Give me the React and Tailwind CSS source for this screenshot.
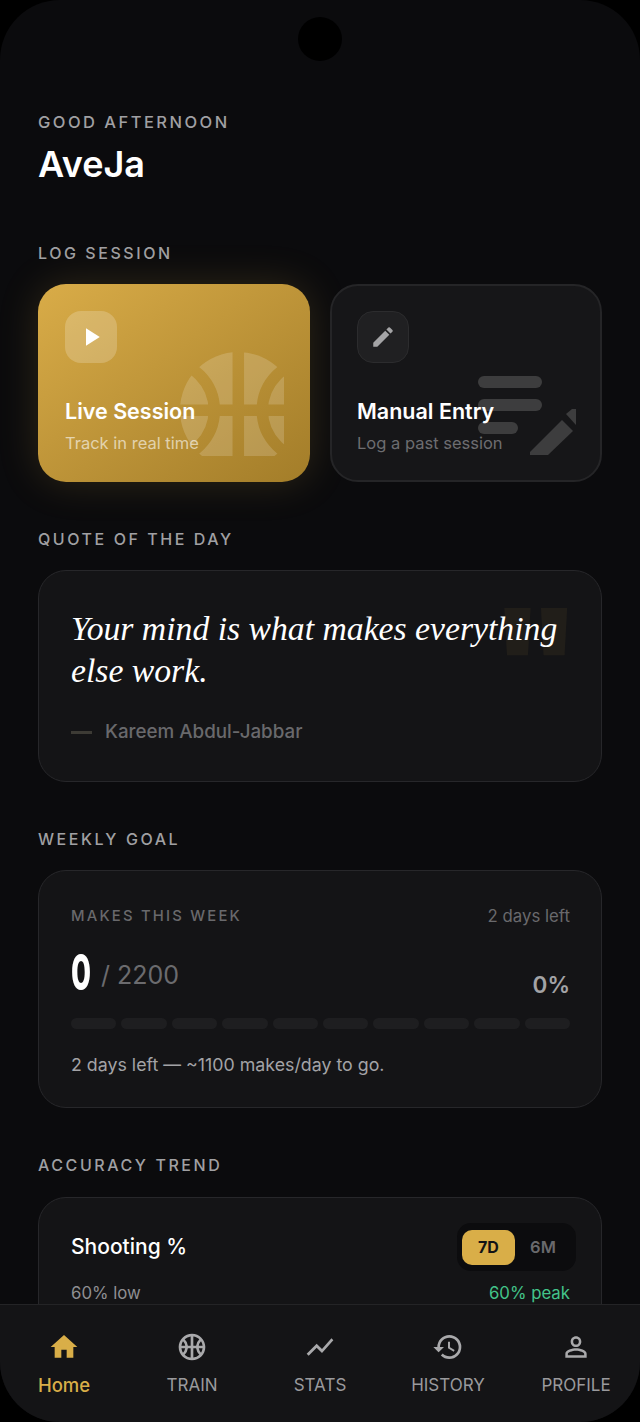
import { MdHome, MdOutlineSportsBasketball, MdShowChart, MdHistory, MdPersonOutline, MdEdit, MdPlayArrow } from 'react-icons/md';

const NAV = [
  { label: 'Home', Icon: MdHome, active: true },
  { label: 'TRAIN', Icon: MdOutlineSportsBasketball },
  { label: 'STATS', Icon: MdShowChart },
  { label: 'HISTORY', Icon: MdHistory },
  { label: 'PROFILE', Icon: MdPersonOutline },
];

const SectionLabel = ({ children, className = '' }) => (
  <div className={`text-[16px] leading-5 font-medium tracking-[0.16em] text-[#a0a0a3] ${className}`}>{children}</div>
);

const Card = ({ children, className = '' }) => (
  <div className={`rounded-[28px] border border-[#27272a] bg-[#141416] ${className}`}>{children}</div>
);

// ball is bigger than its box, so the right and bottom edges come out flat
function BallWatermark() {
  return (
    <svg className="absolute left-[142px] top-[68px] text-white/[0.17]" width="104" height="104" viewBox="0 0 104 104">
      <mask id="ball-cuts">
        <rect width="104" height="104" fill="white" />
        <g fill="none" stroke="black" strokeWidth="11.5">
          <path d="M58.300 0 V104 M0 58.300 H104" />
          <circle cx="-15.400" cy="58.300" r="49.700" />
          <circle cx="132" cy="58.300" r="49.700" />
        </g>
      </mask>
      <circle cx="58.300" cy="58.300" r="58.300" fill="currentColor" mask="url(#ball-cuts)" />
    </svg>
  );
}

function ManualWatermark() {
  return (
    <svg className="absolute left-[146px] top-[90px]" width="100" height="82" viewBox="0 0 100 82" fill="#3d3d3e">
      <rect x="0" y="0" width="64" height="12" rx="6" />
      <rect x="0" y="23" width="64" height="12" rx="6" />
      <rect x="0" y="46" width="40" height="12" rx="6" />
      <path d="M52 79 V76 L84 44 L95 55 L70 79 Z" />
      <path d="M88 38 L94 33 H98 V49 Z" />
    </svg>
  );
}

export default function App() {
  return (
    <div className="h-[1422px] w-[640px] bg-black font-['Inter',sans-serif]">
      <div className="relative flex h-full flex-col overflow-hidden rounded-[60px] bg-[#0b0b0d]">
        <div className="absolute left-[298px] top-[17px] h-11 w-11 rounded-full bg-black" />

        <main className="min-h-0 flex-1 overflow-hidden px-[38px] pt-[112px]">
          <div className="text-[16.500px] leading-5 font-medium tracking-[0.15em] text-[#a0a0a3]">GOOD AFTERNOON</div>
          <h1 className="mt-[10px] text-[36px] leading-[44px] font-semibold text-white">AveJa</h1>

          <SectionLabel className="mt-[57px]">LOG SESSION</SectionLabel>
          <div className="mt-[21px] grid grid-cols-2 gap-5">
            <div className="relative h-[198px] overflow-hidden rounded-[28px] bg-gradient-to-br from-[#d9ac48] to-[#a37d29] shadow-[0_0_40px_rgba(212,168,67,0.18)]">
              <BallWatermark />
              <div className="relative flex h-full flex-col px-[27px] pt-[27px]">
                <div className="flex h-[52px] w-[52px] items-center justify-center rounded-2xl bg-white/20">
                  <MdPlayArrow className="text-white" size={30} />
                </div>
                <div className="mt-[34px] text-[21.500px] leading-7 font-semibold text-white">Live Session</div>
                <div className="mt-[6px] text-[16.500px] leading-6 text-white/60">Track in real time</div>
              </div>
            </div>
            <div className="relative h-[198px] overflow-hidden rounded-[28px] border-2 border-[#252527] bg-[#161618]">
              <ManualWatermark />
              <div className="relative flex h-full flex-col px-[25px] pt-[25px]">
                <div className="flex h-[52px] w-[52px] items-center justify-center rounded-2xl border border-[#2c2c2e] bg-[#202022]">
                  <MdEdit className="text-[#a4a4a6]" size={26} />
                </div>
                <div className="mt-[34px] text-[21.500px] leading-7 font-semibold text-white">Manual Entry</div>
                <div className="mt-[6px] text-[16.500px] leading-6 text-[#6d6d70]">Log a past session</div>
              </div>
            </div>
          </div>

          <SectionLabel className="mt-[47px]">QUOTE OF THE DAY</SectionLabel>
          <Card className="relative mt-[21px] h-[212px] overflow-hidden px-8 pt-[37px]">
            <span className="absolute right-[20px] top-[17px] text-[145px] leading-[145px] font-black text-[#d4a843]/[0.07]">"</span>
            <p className="relative font-['Liberation_Serif',serif] text-[33.700px] leading-[42px] text-white italic">
              Your mind is what makes everything else work.
            </p>
            <div className="mt-[28px] flex items-center gap-[13px]">
              <span className="h-[3px] w-[21px] bg-[#3d3b35]" />
              <span className="text-[18.800px] leading-6 font-medium text-[#69696c]">Kareem Abdul-Jabbar</span>
            </div>
          </Card>

          <SectionLabel className="mt-[47px]">WEEKLY GOAL</SectionLabel>
          <Card className="mt-[21px] h-[238px] pl-8 pr-[31px] pt-[35px]">
            <div className="flex items-center justify-between">
              <span className="text-[14.800px] leading-5 font-medium tracking-[0.15em] text-[#69696c]">MAKES THIS WEEK</span>
              <span className="text-[16.800px] leading-5 text-[#69696c]">2 days left</span>
            </div>
            <div className="mt-[16px] flex h-[57px] items-end justify-between">
              <div className="flex h-[60px] items-center gap-[10px] self-start">
                <span className="inline-block w-5 origin-left scale-x-[0.58] text-[50px] leading-[60px] font-extrabold text-white">0</span>
                <span className="mt-[5px] text-[25px] leading-8 text-[#6b6b6e]">/ 2200</span>
              </div>
              <span className="text-[22.500px] leading-7 font-semibold text-[#a3a3a6]">0%</span>
            </div>
            <div className="mt-[19px] grid grid-cols-10 gap-[5px]">
              {Array.from({ length: 10 }).map((_, i) => (
                <div key={i} className="h-[11px] rounded-md bg-[#1e1e20]" />
              ))}
            </div>
            <p className="mt-[24px] text-[17.800px] leading-6 text-[#a3a3a6]">2 days left — ~1100 makes/day to go.</p>
          </Card>

          <SectionLabel className="mt-[47px]">ACCURACY TREND</SectionLabel>
          <Card className="mt-[22px] h-[300px] pl-8 pr-[25px] pt-[25px]">
            <div className="flex items-center justify-between">
              <span className="text-[21px] leading-7 font-medium text-white">Shooting %</span>
              <div className="flex h-12 items-center rounded-[14px] bg-[#0c0c0e] p-[5px]">
                <span className="flex h-[35px] w-[53px] items-center justify-center rounded-[10px] bg-[#d9ae48] text-[16px] font-bold text-[#131315]">7D</span>
                <span className="flex h-[35px] w-[56px] items-center justify-center text-[16.500px] font-semibold text-[#69696c]">6M</span>
              </div>
            </div>
            <div className="mt-[10px] flex items-center justify-between pr-[6px] text-[16.800px] leading-6">
              <span className="text-[#8f8f92]">60% low</span>
              <span className="text-[#43c48a]">60% peak</span>
            </div>
          </Card>
        </main>

        <nav className="grid h-[118px] shrink-0 grid-cols-5 border-t border-[#242426] bg-[#141416]">
          {NAV.map(({ label, Icon, active }) => (
            <div key={label} className="flex flex-col items-center pt-[26px]">
              <Icon className={active ? 'text-[#d9ae48]' : 'text-[#a9a9ab]'} size={32} />
              <span className={`mt-[10px] leading-6 ${active ? 'text-[18.500px] font-medium text-[#d9ae48]' : 'text-[17px] text-[#9a9a9d]'}`}>{label}</span>
            </div>
          ))}
        </nav>
      </div>
    </div>
  );
}
